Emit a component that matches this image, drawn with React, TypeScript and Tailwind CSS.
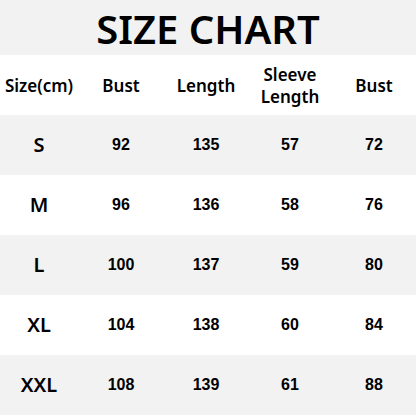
import React from 'react';

const rows = [
  { size: 'S', bust: 92, length: 135, sleeve: 57, bust2: 72 },
  { size: 'M', bust: 96, length: 136, sleeve: 58, bust2: 76 },
  { size: 'L', bust: 100, length: 137, sleeve: 59, bust2: 80 },
  { size: 'XL', bust: 104, length: 138, sleeve: 60, bust2: 84 },
  { size: 'XXL', bust: 108, length: 139, sleeve: 61, bust2: 88 },
];

export default function App() {
  return (
    <div
      className="w-[416px] h-[416px] bg-white text-black flex flex-col"
      style={{ fontFamily: '"Noto Sans", "Liberation Sans", sans-serif' }}
    >
      <div className="h-[55px] bg-[#f2f2f2] flex items-center justify-center">
        <h1 className="text-[40px] font-semibold leading-none pt-[2px]">SIZE CHART</h1>
      </div>

      <div className="h-[60px] grid grid-cols-[78px_86px_84px_84px_84px] items-center text-center text-[17px] font-semibold leading-[22px] pt-[2px]">
        <div>Size(cm)</div>
        <div>Bust</div>
        <div>Length</div>
        <div>
          Sleeve
          <br />
          Length
        </div>
        <div>Bust</div>
      </div>

      {rows.map((r, i) => (
        <div
          key={r.size}
          className={
            'h-[60px] grid grid-cols-[78px_86px_84px_84px_84px] items-center text-center ' +
            (i % 2 === 0 ? 'bg-[#f2f2f2]' : 'bg-white')
          }
        >
          <div className="text-[20px] font-semibold">{r.size}</div>
          <div className="text-[16px] font-bold font-['Liberation_Sans',sans-serif]">{r.bust}</div>
          <div className="text-[16px] font-bold font-['Liberation_Sans',sans-serif]">{r.length}</div>
          <div className="text-[16px] font-bold font-['Liberation_Sans',sans-serif]">{r.sleeve}</div>
          <div className="text-[16px] font-bold font-['Liberation_Sans',sans-serif]">{r.bust2}</div>
        </div>
      ))}
    </div>
  );
}
